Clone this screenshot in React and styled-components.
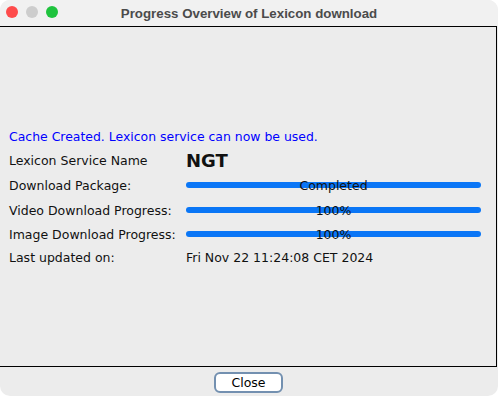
import React from 'react';
import styled, { createGlobalStyle } from 'styled-components';

const GlobalStyle = createGlobalStyle`
  html, body {
    margin: 0;
    padding: 0;
    background: #ffffff;
  }
  body {
    font-family: "DejaVu Sans", "Liberation Sans", sans-serif;
  }
`;

const Window = styled.div`
  width: 498px;
  height: 396px;
  background: #ececec;
  border-radius: 10px;
  overflow: hidden;
  display: flex;
  flex-direction: column;
`;

const TitleBar = styled.div`
  position: relative;
  height: 26px;
  background: #f1f1f1;
  display: flex;
  align-items: center;
  justify-content: center;
  flex-shrink: 0;
`;

const Lights = styled.div`
  position: absolute;
  left: 6px;
  top: 6px;
  display: flex;
  gap: 8px;
`;

const Light = styled.span`
  width: 12px;
  height: 12px;
  border-radius: 50%;
  background: ${p => p.color};
`;

const Title = styled.div`
  font-family: "Liberation Sans", sans-serif;
  font-weight: bold;
  font-size: 13.3px;
  color: #4b4b4b;
`;

const Panel = styled.div`
  height: 341px;
  border-top: 1px solid #000;
  border-right: 1px solid #000;
  border-bottom: 1px solid #000;
  margin-right: 1px;
  box-sizing: border-box;
  padding: 102px 0 0 9px;
`;

const Notice = styled.div`
  font-size: 12.45px;
  color: #0000ff;
  height: 16px;
  line-height: 16px;
`;

const Grid = styled.div`
  display: grid;
  grid-template-columns: 177px 295px;
  grid-template-rows: 24px 26px 24.5px 23.5px 23px;
  margin-top: 3px;
`;

const Label = styled.div`
  font-size: 12.5px;
  color: #111;
  display: flex;
  align-items: center;
`;

const Value = styled.div`
  font-size: ${p => (p.big ? '18px' : '12.5px')};
  font-weight: ${p => (p.big ? 'bold' : 'normal')};
  color: #111;
  display: flex;
  align-items: center;
`;

const BarCell = styled.div`
  position: relative;
  display: flex;
  align-items: center;
`;

const Bar = styled.div`
  width: 100%;
  height: 6px;
  border-radius: 3px;
  background: #0a76f6;
`;

const BarText = styled.span`
  position: absolute;
  left: 0;
  right: 0;
  top: 50%;
  transform: translateY(-46%);
  text-align: center;
  font-size: 12.5px;
  color: #111;
`;

const Footer = styled.div`
  flex: 1;
  display: flex;
  justify-content: center;
  align-items: center;
  padding-top: 1px;
`;

const CloseButton = styled.button`
  width: 69px;
  height: 21px;
  background: #ffffff;
  border: 2px solid #7390b0;
  border-radius: 6px;
  font-family: "DejaVu Sans", sans-serif;
  font-size: 12.5px;
  color: #000;
  padding: 0;
  margin-left: -1px;
`;

const rows = [
  { label: 'Download Package:', text: 'Completed' },
  { label: 'Video Download Progress:', text: '100%' },
  { label: 'Image Download Progress:', text: '100%' },
];

const App = () => (
  <>
    <GlobalStyle />
    <Window>
      <TitleBar>
        <Lights>
          <Light color="#fe4b4b" />
          <Light color="#cdcdcd" />
          <Light color="#1fc33e" />
        </Lights>
        <Title>Progress Overview of Lexicon download</Title>
      </TitleBar>
      <Panel>
        <Notice>Cache Created. Lexicon service can now be used.</Notice>
        <Grid>
          <Label>Lexicon Service Name</Label>
          <Value big>NGT</Value>
          {rows.map(r => (
            <React.Fragment key={r.label}>
              <Label>{r.label}</Label>
              <BarCell>
                <Bar />
                <BarText>{r.text}</BarText>
              </BarCell>
            </React.Fragment>
          ))}
          <Label>Last updated on:</Label>
          <Value>Fri Nov 22 11:24:08 CET 2024</Value>
        </Grid>
      </Panel>
      <Footer>
        <CloseButton>Close</CloseButton>
      </Footer>
    </Window>
  </>
);

export default App;
